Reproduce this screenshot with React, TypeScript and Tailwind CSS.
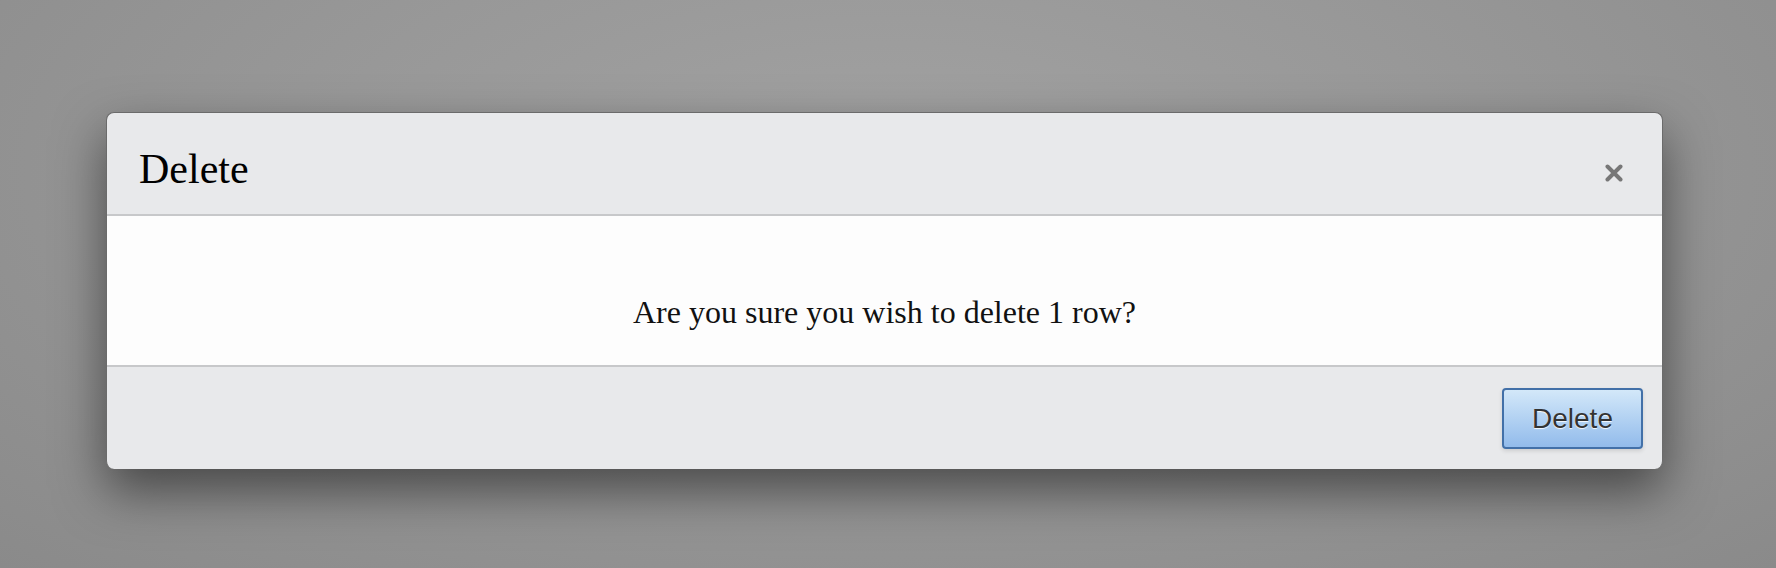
import React from 'react';

export default function App() {
    return (
        <div className="w-full h-[568px] overflow-hidden bg-[radial-gradient(ellipse_at_50%_30%,#a2a2a2_0%,#989898_45%,#8a8a8a_100%)] pt-[112px] pl-[106px]">
            {/* Dialog */}
            <div className="w-[1557px] rounded-[8px] border border-[#6b6b6b] border-b-0 overflow-hidden bg-[#e8e9eb] shadow-[0_22px_50px_rgba(0,0,0,0.5)]">
                {/* Header */}
                <div className="h-[103px] flex items-start justify-between pt-[33px] pl-[32px] pr-[39px] border-b-2 border-[#c7c8ca]">
                    <h1 className="text-[42px] leading-[46px] text-black font-normal" style={{ fontFamily: '"Liberation Serif", "Times New Roman", serif' }}>
                        Delete
                    </h1>
                    <button className="mt-[18px] w-[18px] h-[18px] flex items-center justify-center">
                        <svg width="18" height="18" viewBox="0 0 18 18">
                            <path d="M2.5 2.5 L15.5 15.5 M15.5 2.5 L2.5 15.5" stroke="#777777" strokeWidth="4" strokeLinecap="round" />
                        </svg>
                    </button>
                </div>

                {/* Body */}
                <div className="h-[151px] bg-[#fdfdfd] border-b-2 border-[#c7c8ca] pt-[78px] text-center">
                    <p className="text-[32px] leading-[36px] text-[#111]" style={{ fontFamily: '"Liberation Serif", "Times New Roman", serif' }}>
                        Are you sure you wish to delete 1 row?
                    </p>
                </div>

                {/* Footer */}
                <div className="h-[102px] flex items-center justify-end pr-[19px] pt-[1px]">
                    <button
                        className="w-[141px] h-[61px] rounded-[4px] border-2 border-[#4270a8] bg-gradient-to-b from-[#d3e8f9] to-[#92bbeb] text-[28px] text-[#333] shadow-[0_2px_4px_rgba(0,0,0,0.12)] [text-shadow:0_1px_1px_rgba(255,255,255,0.9)]"
                        style={{ fontFamily: '"Liberation Sans", Arial, sans-serif' }}
                    >
                        Delete
                    </button>
                </div>
            </div>
        </div>
    );
}
